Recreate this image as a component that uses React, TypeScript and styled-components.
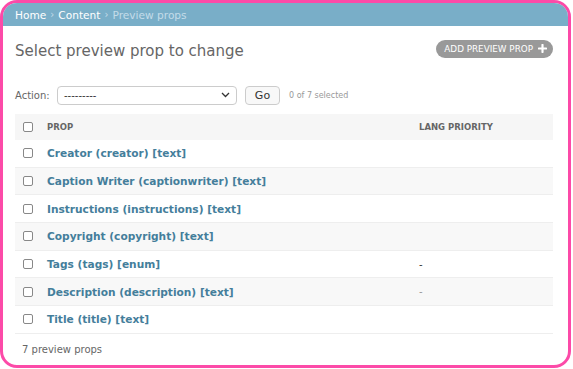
import React from 'react';
import styled, { createGlobalStyle } from 'styled-components';

interface PropRow {
  label: string;
  priority?: string;
  faint?: boolean;
}

const rows: PropRow[] = [
  { label: 'Creator (creator) [text]' },
  { label: 'Caption Writer (captionwriter) [text]' },
  { label: 'Instructions (instructions) [text]' },
  { label: 'Copyright (copyright) [text]' },
  { label: 'Tags (tags) [enum]', priority: '-' },
  { label: 'Description (description) [text]', priority: '-', faint: true },
  { label: 'Title (title) [text]' },
];

export default function App() {
  return (
    <>
      <GlobalStyle />
      <Frame>
        <Breadcrumbs>
          <Crumb>Home</Crumb>
          <Sep>›</Sep>
          <Crumb>Content</Crumb>
          <Sep>›</Sep>
          <Current>Preview props</Current>
        </Breadcrumbs>
        <Content>
          <TitleRow>
            <Title>Select preview prop to change</Title>
            <AddButton>
              ADD PREVIEW PROP
              <PlusIcon />
            </AddButton>
          </TitleRow>
          <Actions>
            <ActionLabel>Action:</ActionLabel>
            <SelectBox>
              <span>---------</span>
              <Chevron />
            </SelectBox>
            <GoButton>Go</GoButton>
            <Counter>0 of 7 selected</Counter>
          </Actions>
          <Table>
            <HeadRow>
              <CheckCell>
                <Checkbox />
              </CheckCell>
              <HeadCell>Prop</HeadCell>
              <HeadCell>Lang priority</HeadCell>
            </HeadRow>
            {rows.map((row, i) => (
              <BodyRow key={row.label} striped={i % 2 === 1}>
                <CheckCell>
                  <Checkbox />
                </CheckCell>
                <LinkCell>{row.label}</LinkCell>
                <PriorityCell faint={row.faint}>{row.priority}</PriorityCell>
              </BodyRow>
            ))}
          </Table>
          <Footer>7 preview props</Footer>
        </Content>
      </Frame>
    </>
  );
}

const PlusIcon = () => (
  <svg width="9" height="9" viewBox="0 0 10 10">
    <path d="M5 1v8M1 5h8" stroke="#fff" strokeWidth="2.4" strokeLinecap="round" />
  </svg>
);

const Chevron = () => (
  <svg width="9" height="6" viewBox="0 0 9 6">
    <path d="M1 1l3.5 3.5L8 1" stroke="#333" strokeWidth="1.3" fill="none" />
  </svg>
);

const GlobalStyle = createGlobalStyle`
  html, body {
    margin: 0;
    padding: 0;
    background: #fff;
  }
  body {
    font-family: "DejaVu Sans", Verdana, sans-serif;
  }
`;

const Frame = styled.div`
  box-sizing: border-box;
  width: 571px;
  height: 368px;
  border: 3px solid #fc4aa8;
  border-radius: 17px;
  overflow: hidden;
  background: #fff;
`;

const Breadcrumbs = styled.div`
  display: flex;
  align-items: center;
  gap: 4px;
  height: 23px;
  padding: 0 12px;
  background: #79aec8;
  font-size: 10.6px;
  color: #c4dce8;
`;

const Crumb = styled.span`
  color: #fff;
`;

const Sep = styled.span`
  color: #c4dce8;
  font-size: 10px;
`;

const Current = styled.span`
  color: #c4dce8;
`;

const Content = styled.div`
  padding: 0 15px 0 12px;
`;

const TitleRow = styled.div`
  display: flex;
  align-items: center;
  justify-content: space-between;
  height: 48px;
`;

const Title = styled.h1`
  margin: 1px 0 0;
  font-size: 15px;
  font-weight: normal;
  color: #666;
`;

const AddButton = styled.div`
  display: flex;
  align-items: center;
  gap: 5px;
  height: 18px;
  padding: 0 6px 0 8px;
  margin-top: -3px;
  border-radius: 9px;
  background: #999;
  color: #fff;
  font-size: 8.8px;
`;

const Actions = styled.div`
  display: flex;
  align-items: center;
  height: 20px;
  margin-top: 11px;
`;

const ActionLabel = styled.span`
  font-size: 10px;
  color: #666;
  width: 42px;
`;

const SelectBox = styled.div`
  box-sizing: border-box;
  display: flex;
  align-items: center;
  justify-content: space-between;
  width: 180px;
  height: 19px;
  padding: 0 6px;
  border: 1px solid #ccc;
  border-radius: 4px;
  font-size: 10px;
  color: #333;
`;

const GoButton = styled.div`
  box-sizing: border-box;
  display: flex;
  align-items: center;
  justify-content: center;
  width: 35px;
  height: 19px;
  margin-left: 8px;
  border: 1px solid #ccc;
  border-radius: 4px;
  background: #f8f8f8;
  font-size: 11px;
  color: #333;
`;

const Counter = styled.span`
  margin-left: 9px;
  font-size: 8px;
  color: #999;
`;

const Table = styled.div`
  margin-top: 9px;
`;

const HeadRow = styled.div`
  display: grid;
  grid-template-columns: 32px 372px 1fr;
  align-items: center;
  height: 26px;
  background: #f6f6f6;
`;

const HeadCell = styled.span`
  font-size: 8.5px;
  font-weight: bold;
  text-transform: uppercase;
  color: #666;
`;

const BodyRow = styled.div<{ striped: boolean }>`
  box-sizing: border-box;
  display: grid;
  grid-template-columns: 32px 372px 1fr;
  align-items: center;
  height: 27.7px;
  border-bottom: 1px solid #eee;
  background: ${(p) => (p.striped ? '#f8f8f8' : '#fff')};
`;

const CheckCell = styled.div`
  display: flex;
  padding-left: 8px;
`;

const Checkbox = styled.span`
  box-sizing: border-box;
  width: 10px;
  height: 10px;
  border: 1px solid #888;
  border-radius: 2px;
  background: #fff;
`;

const LinkCell = styled.span`
  font-size: 10.6px;
  font-weight: bold;
  color: #447e9b;
`;

const PriorityCell = styled.span<{ faint?: boolean }>`
  font-size: 10px;
  color: ${(p) => (p.faint ? '#999' : '#333')};
`;

const Footer = styled.div`
  padding: 10px 0 0 7px;
  font-size: 10px;
  color: #666;
`;
